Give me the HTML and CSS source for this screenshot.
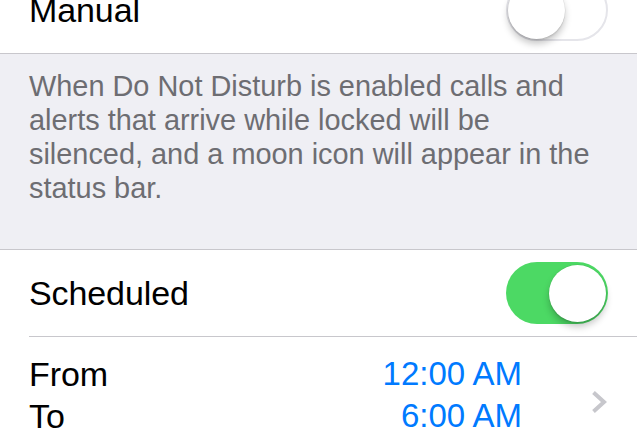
FILE: index.html
```html
<!DOCTYPE html>
<html>
<head>
<meta charset="utf-8">
<link rel="stylesheet" href="styles.css">
</head>
<body>
<div class="page">
  <div class="row row-manual">
    <span class="label">Manual</span>
    <span class="toggle toggle-off"><span class="knob"></span></span>
  </div>
  <div class="footer">
    <p class="caption">When Do Not Disturb is enabled calls and alerts that arrive while locked will be silenced, and a moon icon will appear in the status bar.</p>
  </div>
  <div class="group">
    <div class="row row-scheduled">
      <span class="label">Scheduled</span>
      <span class="toggle toggle-on"><span class="knob"></span></span>
    </div>
    <div class="row-times">
      <div class="labels">
        <span class="label line">From</span>
        <span class="label line">To</span>
      </div>
      <div class="values">
        <span class="value line">12:00 AM</span>
        <span class="value line">6:00 AM</span>
      </div>
      <svg class="chevron" width="18" height="24" viewBox="0 0 18 24">
        <path d="M3.5 2.5 L14 12 L3.5 21.5" fill="none" stroke="#c7c7cc" stroke-width="4" stroke-linecap="butt" stroke-linejoin="miter"/>
      </svg>
    </div>
  </div>
</div>
</body>
</html>
```

FILE: styles.css
```css
html, body {
  margin: 0;
  padding: 0;
  background: #ffffff;
  overflow: hidden;
}
body {
  font-family: "Liberation Sans", Arial, Helvetica, sans-serif;
  width: 637px;
  height: 434px;
}
.page {
  display: flex;
  flex-direction: column;
}
.row {
  display: flex;
  align-items: center;
  justify-content: space-between;
  height: 87px;
  padding: 0 29px 0 29px;
  box-sizing: content-box;
}
.row-manual {
  margin-top: -34px;
  border-bottom: 1px solid #c8c7cc;
}
.label {
  font-size: 34px;
  color: #000;
  letter-spacing: -0.1px;
}
.row-manual .label {
  position: relative;
  top: 1px;
}
.footer {
  background: #efeff4;
  height: 196px;
  box-sizing: border-box;
  padding: 15px 30px 0 29px;
  border-bottom: 1px solid #c8c7cc;
}
.caption {
  margin: 0;
  font-size: 28.9px;
  line-height: 34px;
  color: #6d6d72;
}
.group {
  display: flex;
  flex-direction: column;
}
.row-scheduled {
  height: 86px;
  position: relative;
  margin-bottom: 1px;
}
.row-scheduled::after {
  content: "";
  position: absolute;
  left: 29px;
  right: 0;
  bottom: -1px;
  height: 1px;
  background: #c8c7cc;
}
.toggle {
  width: 102px;
  height: 62px;
  border-radius: 31px;
  box-sizing: border-box;
  display: flex;
  align-items: center;
  padding: 0 2px;
  flex-shrink: 0;
}
.toggle-off {
  background: #fff;
  border: 2px solid #e5e5ea;
  justify-content: flex-start;
  padding: 0;
}
.toggle-on {
  background: #4cd964;
  justify-content: flex-end;
}
.knob {
  width: 57px;
  height: 57px;
  border-radius: 50%;
  background: #fff;
  box-shadow: 0 0 0 0.5px rgba(0, 0, 0, 0.08), 0 5px 7px rgba(0, 0, 0, 0.22), 0 2px 1px rgba(0, 0, 0, 0.06);
}
.toggle-off .knob {
  margin-top: 1px;
}
.row-times {
  display: flex;
  align-items: flex-start;
  padding: 16px 29px 0 29px;
  height: 130px;
}
.labels {
  display: flex;
  flex-direction: column;
  flex: 1;
}
.values {
  display: flex;
  flex-direction: column;
  align-items: flex-end;
}
.line {
  line-height: 42px;
}
.value {
  font-size: 33px;
  color: #007aff;
}
.chevron {
  margin-left: 68px;
  margin-top: 37px;
  flex-shrink: 0;
}
```
